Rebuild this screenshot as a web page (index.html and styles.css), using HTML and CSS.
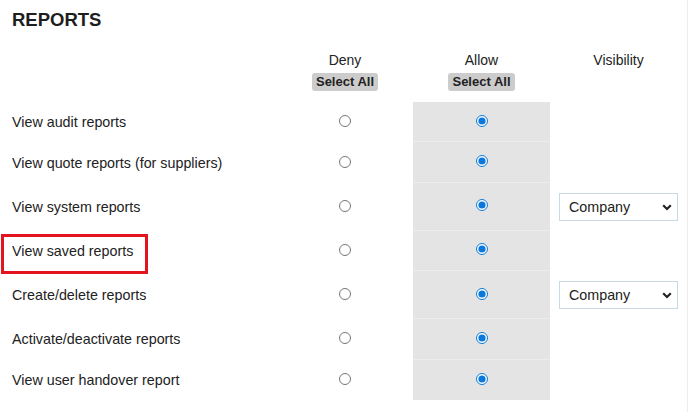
FILE: index.html
```html
<!DOCTYPE html>
<html>
<head>
<meta charset="utf-8">
<link rel="stylesheet" href="styles.css">
</head>
<body>
<div class="page">
  <h1 class="title">REPORTS</h1>
  <div class="grid head">
    <div></div>
    <div class="hcell"><span class="htext">Deny</span><button class="selall">Select All</button></div>
    <div class="hcell"><span class="htext">Allow</span><button class="selall">Select All</button></div>
    <div class="hcell"><span class="htext">Visibility</span></div>
  </div>
  <div class="rows">
    <div class="grid row">
      <div class="label">View audit reports</div>
      <div class="cell"><input type="radio" name="r1"></div>
      <div class="cell allow"><input type="radio" name="r1" checked></div>
      <div class="cell"></div>
    </div>
    <div class="grid row">
      <div class="label">View quote reports (for suppliers)</div>
      <div class="cell"><input type="radio" name="r2"></div>
      <div class="cell allow"><input type="radio" name="r2" checked></div>
      <div class="cell"></div>
    </div>
    <div class="grid row tall">
      <div class="label">View system reports</div>
      <div class="cell"><input type="radio" name="r3"></div>
      <div class="cell allow"><input type="radio" name="r3" checked></div>
      <div class="cell"><div class="selwrap"><select class="vis"><option>Company</option></select><svg class="chev" width="10" height="7" viewBox="0 0 10 7"><path d="M1.2 1.3 L5 5 L8.8 1.3" fill="none" stroke="#222" stroke-width="2.2"/></svg></div></div>
    </div>
    <div class="grid row">
      <div class="label hl">View saved reports</div>
      <div class="cell"><input type="radio" name="r4"></div>
      <div class="cell allow"><input type="radio" name="r4" checked></div>
      <div class="cell"></div>
    </div>
    <div class="grid row tall">
      <div class="label">Create/delete reports</div>
      <div class="cell"><input type="radio" name="r5"></div>
      <div class="cell allow"><input type="radio" name="r5" checked></div>
      <div class="cell"><div class="selwrap"><select class="vis"><option>Company</option></select><svg class="chev" width="10" height="7" viewBox="0 0 10 7"><path d="M1.2 1.3 L5 5 L8.8 1.3" fill="none" stroke="#222" stroke-width="2.2"/></svg></div></div>
    </div>
    <div class="grid row">
      <div class="label">Activate/deactivate reports</div>
      <div class="cell"><input type="radio" name="r6"></div>
      <div class="cell allow"><input type="radio" name="r6" checked></div>
      <div class="cell"></div>
    </div>
    <div class="grid row last">
      <div class="label">View user handover report</div>
      <div class="cell"><input type="radio" name="r7"></div>
      <div class="cell allow"><input type="radio" name="r7" checked></div>
      <div class="cell"></div>
    </div>
  </div>
</div>
</body>
</html>
```
FILE: styles.css
```css
html, body {
  margin: 0;
  padding: 0;
  background: #fff;
}
body {
  font-family: "Liberation Sans", Arial, sans-serif;
  color: #222;
}
.page {
  width: 687px;
  height: 412px;
  border-right: 1px solid #ececec;
  box-sizing: content-box;
  overflow: hidden;
}
.title {
  margin: 0;
  padding: 9px 12px 0;
  font-size: 18.5px;
  line-height: 22px;
  font-weight: bold;
  color: #1e1e1e;
}
.grid {
  display: grid;
  grid-template-columns: 277px 136px 137px 137px;
}
.head {
  margin-top: 21px;
  height: 50px;
}
.hcell {
  display: flex;
  flex-direction: column;
  align-items: center;
}
.htext {
  font-size: 14px;
  line-height: 17px;
}
.selall {
  margin-top: 4px;
  font-family: "Liberation Sans", Arial, sans-serif;
  font-weight: bold;
  font-size: 13px;
  line-height: 18px;
  height: 18px;
  padding: 0 4px;
  border: none;
  border-radius: 3px;
  background: #cccccc;
  color: #222;
}
.row {
  height: 40.4px;
}
.row.tall {
  height: 48px;
}
.label {
  position: relative;
  display: flex;
  align-items: center;
  padding-left: 12px;
  font-size: 14.3px;
}
.label.hl::after {
  content: "";
  position: absolute;
  left: 1px;
  top: 3px;
  width: 141px;
  height: 34px;
  border: 3px solid #e3141e;
}
.cell {
  display: flex;
  align-items: center;
  justify-content: center;
}
.cell.allow {
  background: #e4e4e4;
  border-bottom: 1px solid #ececec;
  box-sizing: border-box;
}
.row.last .cell.allow {
  border-bottom: none;
}
input[type="radio"] {
  margin: 0 0 2px 0;
  width: 12px;
  height: 12px;
  accent-color: #0b78d9;
}
.selwrap {
  position: relative;
  width: 119px;
  height: 28px;
}
.vis {
  appearance: none;
  -webkit-appearance: none;
  width: 119px;
  height: 28px;
  box-sizing: border-box;
  border: 1px solid #c9dbe2;
  border-radius: 0;
  background: #fff;
  padding: 0 0 0 9px;
  font-family: "Liberation Sans", Arial, sans-serif;
  font-size: 14.3px;
  color: #222;
}
.chev {
  position: absolute;
  right: 6px;
  top: 11px;
  pointer-events: none;
}
```
